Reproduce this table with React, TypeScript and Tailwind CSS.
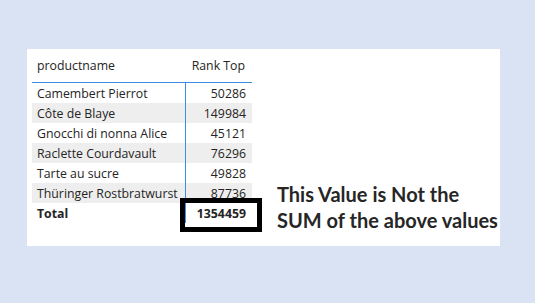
const rows = [
  { name: "Camembert Pierrot", value: "50286" },
  { name: "Côte de Blaye", value: "149984" },
  { name: "Gnocchi di nonna Alice", value: "45121" },
  { name: "Raclette Courdavault", value: "76296" },
  { name: "Tarte au sucre", value: "49828" },
  { name: "Thüringer Rostbratwurst", value: "87736" },
]

export default function App() {
  return (
    <div className="w-[535px] h-[303px] bg-[#dae3f3] pl-[27px] pt-[49px]">
      <div className="w-[473px] h-[197px] bg-white flex pl-[5px]">
        <div className="w-[220px] text-[12.3px] text-[#252423] font-['Open_Sans',sans-serif]">
          <div className="h-[34px] flex items-center pt-[2px] border-b border-[#3a8ee6]">
            <div className="w-[153px] pl-[5px]">productname</div>
            <div className="w-[67px] text-right pr-[7px]">Rank Top</div>
          </div>
          {rows.map((r, i) => (
            <div key={r.name} className={"h-[20px] flex items-center " + (i % 2 === 1 ? "bg-[#eeeeee]" : "")}>
              <div className="w-[153px] pl-[5px] pt-[2px] whitespace-nowrap">{r.name}</div>
              <div className="w-[67px] h-full flex items-center justify-end pr-[6px] pt-[2px] border-l border-[#3a8ee6]">{r.value}</div>
            </div>
          ))}
          <div className="h-[20px] flex items-center font-bold">
            <div className="w-[153px] pl-[5px] pt-[2px]">Total</div>
            <div className="relative w-[67px] h-full flex items-center justify-end pr-[6px] pt-[2px] border-l border-[#3a8ee6]">
              1354459
              <div className="absolute left-[-6px] top-[-5px] w-[82px] h-[34px] border-[5px] border-black"></div>
            </div>
          </div>
        </div>
        <div className="ml-[25px] mt-[132px] text-[20px] leading-[26px] font-bold text-[#262626] font-['Lato',sans-serif]">
          <div>This Value is Not the</div>
          <div>SUM of the above values</div>
        </div>
      </div>
    </div>
  )
}
